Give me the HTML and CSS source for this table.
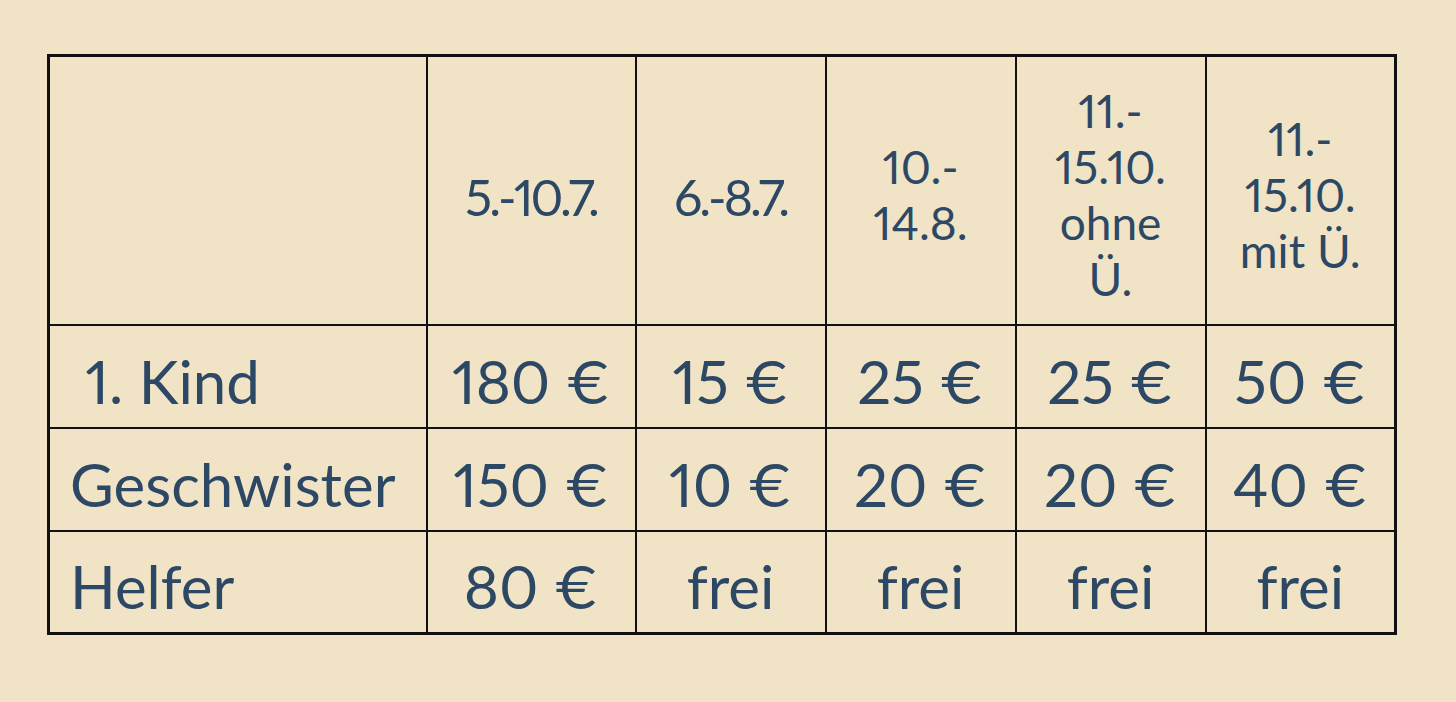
FILE: index.html
```html
<!DOCTYPE html>
<html lang="de">
<head>
<meta charset="utf-8">
<title>Preise</title>
<link rel="stylesheet" href="styles.css">
</head>
<body>
<main class="page">
  <table class="prices">
    <colgroup>
      <col class="c-label">
      <col class="c-a">
      <col class="c-b">
      <col class="c-b">
      <col class="c-b">
      <col class="c-b">
    </colgroup>
    <thead>
      <tr class="head-row">
        <th></th>
        <th class="tight">5.-10.7.</th>
        <th class="tight">6.-8.7.</th>
        <th>10.-<br>14.8.</th>
        <th>11.-<br>15.10.<br>ohne<br>Ü.</th>
        <th>11.-<br>15.10.<br>mit Ü.</th>
      </tr>
    </thead>
    <tbody>
      <tr>
        <td class="label">&nbsp;1. Kind</td>
        <td>180 €</td>
        <td>15 €</td>
        <td>25 €</td>
        <td>25 €</td>
        <td>50 €</td>
      </tr>
      <tr>
        <td class="label">Geschwister</td>
        <td>150 €</td>
        <td>10 €</td>
        <td>20 €</td>
        <td>20 €</td>
        <td>40 €</td>
      </tr>
      <tr>
        <td class="label">Helfer</td>
        <td>80 €</td>
        <td>frei</td>
        <td>frei</td>
        <td>frei</td>
        <td>frei</td>
      </tr>
    </tbody>
  </table>
</main>
</body>
</html>
```

FILE: styles.css
```css
html, body {
  margin: 0;
  padding: 0;
}

body {
  background: #f0e3c6;
  font-family: Lato, "Open Sans", "DejaVu Sans", sans-serif;
  color: #2d4865;
  width: 1456px;
  height: 702px;
  overflow: hidden;
}

.page {
  padding: 54px 0 0 47px;
}

.prices {
  border-collapse: collapse;
  table-layout: fixed;
  width: 1349px;
  border: 3px solid #111;
  font-variant-numeric: proportional-nums;
}

.c-label { width: 378px; }
.c-a { width: 209px; }
.c-b { width: 190px; }

.prices th,
.prices td {
  border: 2px solid #111;
  padding: 0;
  text-align: center;
  vertical-align: middle;
}

.head-row {
  height: 269px;
}

.prices th {
  font-weight: 400;
  font-size: 46px;
  line-height: 56px;
  letter-spacing: 0;
  padding-top: 10px;
}

.prices th.tight {
  letter-spacing: -3px;
  font-size: 50px;
  line-height: 60px;
  padding-top: 14px;
}

.prices tbody tr {
  height: 103px;
}

.prices td {
  font-size: 60px;
  line-height: 1;
  padding-top: 9px;
}

.prices td.label {
  text-align: left;
  padding-left: 20px;
}
```
